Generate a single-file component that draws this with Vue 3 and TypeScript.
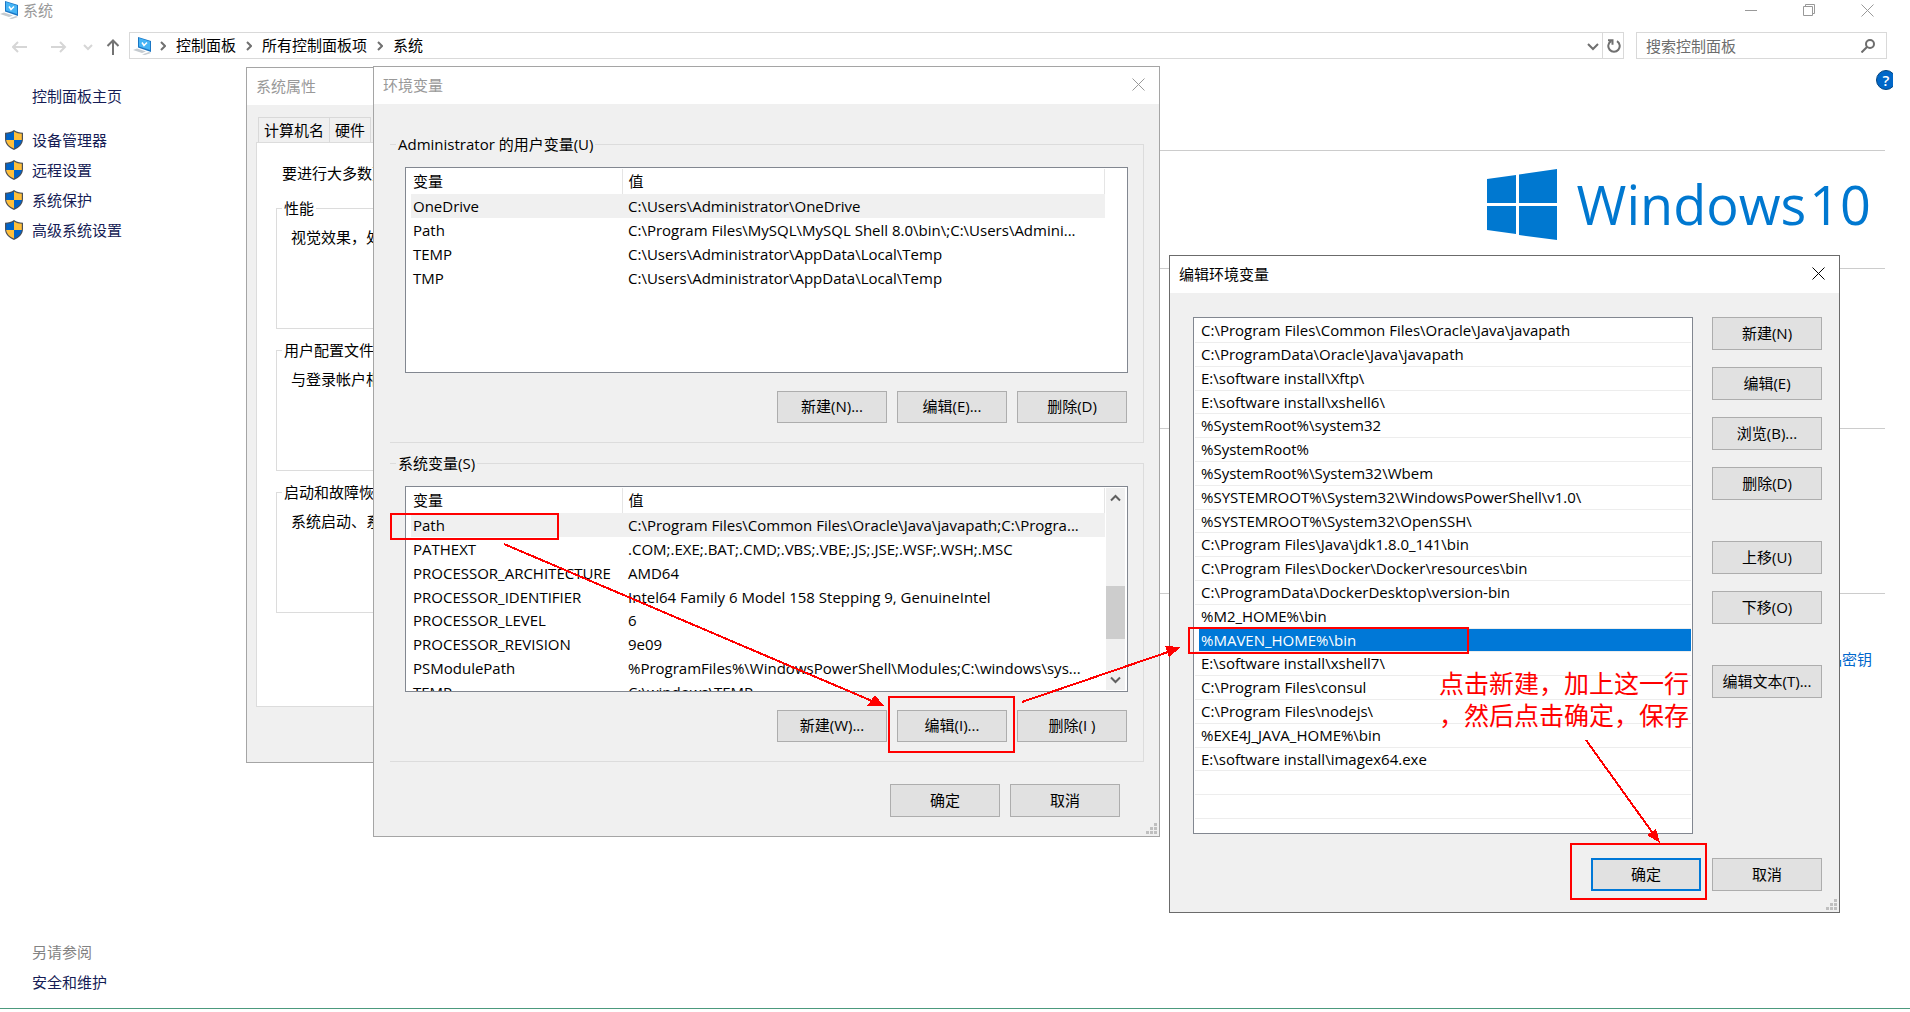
<script setup lang="ts">
interface Variable {
  name: string
  value: string
}

const crumbs: string[] = ['控制面板', '所有控制面板项', '系统']
const tasks: string[] = ['设备管理器', '远程设置', '系统保护', '高级系统设置']

const propertyGroups = [
  { title: '性能', text: '视觉效果，处' },
  { title: '用户配置文件', text: '与登录帐户相' },
  { title: '启动和故障恢', text: '系统启动、系' },
]

const userVariables: Variable[] = [
  { name: 'OneDrive', value: 'C:\\Users\\Administrator\\OneDrive' },
  { name: 'Path', value: 'C:\\Program Files\\MySQL\\MySQL Shell 8.0\\bin\\;C:\\Users\\Admini...' },
  { name: 'TEMP', value: 'C:\\Users\\Administrator\\AppData\\Local\\Temp' },
  { name: 'TMP', value: 'C:\\Users\\Administrator\\AppData\\Local\\Temp' },
]

const systemVariables: Variable[] = [
  { name: 'Path', value: 'C:\\Program Files\\Common Files\\Oracle\\Java\\javapath;C:\\Progra...' },
  { name: 'PATHEXT', value: '.COM;.EXE;.BAT;.CMD;.VBS;.VBE;.JS;.JSE;.WSF;.WSH;.MSC' },
  { name: 'PROCESSOR_ARCHITECTURE', value: 'AMD64' },
  { name: 'PROCESSOR_IDENTIFIER', value: 'Intel64 Family 6 Model 158 Stepping 9, GenuineIntel' },
  { name: 'PROCESSOR_LEVEL', value: '6' },
  { name: 'PROCESSOR_REVISION', value: '9e09' },
  { name: 'PSModulePath', value: '%ProgramFiles%\\WindowsPowerShell\\Modules;C:\\windows\\sys...' },
  { name: 'TEMP', value: 'C:\\windows\\TEMP' },
]

const groups = [
  {
    title: 'Administrator 的用户变量(U)',
    rows: userVariables,
    buttons: ['新建(N)...', '编辑(E)...', '删除(D)'],
    scroll: false,
  },
  {
    title: '系统变量(S)',
    rows: systemVariables,
    buttons: ['新建(W)...', '编辑(I)...', '删除(I )'],
    scroll: true,
  },
]

const paths: string[] = [
  'C:\\Program Files\\Common Files\\Oracle\\Java\\javapath',
  'C:\\ProgramData\\Oracle\\Java\\javapath',
  'E:\\software install\\Xftp\\',
  'E:\\software install\\xshell6\\',
  '%SystemRoot%\\system32',
  '%SystemRoot%',
  '%SystemRoot%\\System32\\Wbem',
  '%SYSTEMROOT%\\System32\\WindowsPowerShell\\v1.0\\',
  '%SYSTEMROOT%\\System32\\OpenSSH\\',
  'C:\\Program Files\\Java\\jdk1.8.0_141\\bin',
  'C:\\Program Files\\Docker\\Docker\\resources\\bin',
  'C:\\ProgramData\\DockerDesktop\\version-bin',
  '%M2_HOME%\\bin',
  '%MAVEN_HOME%\\bin',
  'E:\\software install\\xshell7\\',
  'C:\\Program Files\\consul',
  'C:\\Program Files\\nodejs\\',
  '%EXE4J_JAVA_HOME%\\bin',
  'E:\\software install\\imagex64.exe',
  '',
  '',
]
const selectedPath = '%MAVEN_HOME%\\bin'

const editActions: string[][] = [
  ['新建(N)', '编辑(E)', '浏览(B)...', '删除(D)'],
  ['上移(U)', '下移(O)'],
  ['编辑文本(T)...'],
]
</script>

<template>
  <div class="desktop" lang="zh-CN">
    <header class="titlebar">
      <svg class="pc" viewBox="0 0 19 18" aria-hidden="true">
        <path d="M5 0l13 4v11L5 10.500z" fill="#1b76c4" />
        <path d="M6 1l11 3.500v8.500L6 9.500z" fill="#45b4f5" />
        <path d="M9 5.500l2 3 3-3" fill="none" stroke="#fff" stroke-width="1.500" />
        <path d="M0 13l4-1.500 9 3-4 1.500zM9 17.500l7-2.500 2 1-6 2z" fill="#c5cbd0" />
      </svg>
      <span class="app-name">系统</span>
      <div class="controls">
        <button type="button" aria-label="最小化"><svg viewBox="0 0 13 13"><path d="M0 6.500h12" /></svg></button>
        <button type="button" aria-label="还原"><svg viewBox="0 0 13 13"><path d="M.5 2.500h9v9h-9zM2.500 2V.5h9v9H10" /></svg></button>
        <button type="button" aria-label="关闭"><svg viewBox="0 0 13 13"><path d="M.5.5l12 12M12.500.5l-12 12" /></svg></button>
      </div>
    </header>

    <nav class="navbar">
      <div class="history">
        <button type="button" class="off" aria-label="后退"><svg width="16" height="14" viewBox="0 0 16 14"><path d="M15 7H1M6 2L1 7l5 5" /></svg></button>
        <button type="button" class="off forward" aria-label="前进"><svg width="16" height="14" viewBox="0 0 16 14"><path d="M0 7h14M9 2l5 5-5 5" /></svg></button>
        <button type="button" class="off recent" aria-label="最近"><svg width="10" height="8" viewBox="0 0 10 8"><path d="M1 2l4 4 4-4" /></svg></button>
        <button type="button" aria-label="向上"><svg width="14" height="16" viewBox="0 0 14 16"><path d="M7 16V1.500M1.500 7L7 1.500 12.500 7" /></svg></button>
      </div>
      <div class="address">
        <svg class="pc" viewBox="0 0 19 18" aria-hidden="true">
          <path d="M5 0l13 4v11L5 10.500z" fill="#1b76c4" />
          <path d="M6 1l11 3.500v8.500L6 9.500z" fill="#45b4f5" />
          <path d="M9 5.500l2 3 3-3" fill="none" stroke="#fff" stroke-width="1.500" />
          <path d="M0 13l4-1.500 9 3-4 1.500zM9 17.500l7-2.500 2 1-6 2z" fill="#c5cbd0" />
        </svg>
        <template v-for="crumb in crumbs" :key="crumb">
          <svg class="sep" width="6" height="10" viewBox="0 0 6 10" aria-hidden="true"><path d="M1 1l4 4-4 4" /></svg>
          <a href="#">{{ crumb }}</a>
        </template>
        <button type="button" class="drop" aria-label="历史记录"><svg width="12" height="8" viewBox="0 0 12 8"><path d="M1 1l5 5 5-5" /></svg></button>
        <button type="button" class="refresh" aria-label="刷新"><svg width="14" height="15" viewBox="0 0 14 15"><path d="M10 2.200A5.700 5.700 0 1 1 4 2.200M1 1.200h4.500v4.500" /></svg></button>
      </div>
      <label class="search">
        <input type="text" placeholder="搜索控制面板" aria-label="搜索控制面板" />
        <svg width="14" height="14" viewBox="0 0 14 14" aria-hidden="true"><circle cx="9" cy="5" r="4" /><path d="M6 8l-5.500 5.500" /></svg>
      </label>
    </nav>

    <div class="content">
      <aside class="sidebar">
        <div>
          <a href="#" class="home">控制面板主页</a>
          <a v-for="task in tasks" :key="task" href="#" class="task">
            <svg width="18" height="20" viewBox="0 0 18 20" aria-hidden="true">
              <path d="M9 0c2.500 2 5.500 2.600 9 2.700V9c0 5-3.500 8.500-9 11C3.500 17.500 0 14 0 9V2.700C3.500 2.600 6.500 2 9 0z" fill="#4a4f57" />
              <path d="M9 1.500V10H1.200V3.800C4 3.600 6.500 3.200 9 1.500z" fill="#0063c8" />
              <path d="M9 1.500c2.500 1.700 5 2.100 7.800 2.300V10H9z" fill="#ffbf3a" />
              <path d="M1.200 10H9v8.600c-4.500-2.100-7.500-4.900-7.800-8.600z" fill="#ffbf3a" />
              <path d="M16.800 10H9v8.600c4.500-2.100 7.500-4.900 7.800-8.600z" fill="#0063c8" />
            </svg>
            <span>{{ task }}</span>
          </a>
        </div>
        <div class="see-also">
          <span>另请参阅</span>
          <a href="#">安全和维护</a>
        </div>
      </aside>
      <main class="main">
        <div class="help-row">
          <button type="button" class="help" aria-label="帮助">?</button>
        </div>
        <section class="brand">
          <svg width="70" height="71" viewBox="0 0 70 71" aria-hidden="true">
            <path fill="#0078d0" d="M0 10l29-4v28H0zM32 5.500L70 0v34H32zM0 37h29v28L0 61zM32 37h38v34l-38-5z" />
          </svg>
          <span class="wordmark"><span>Windows</span><span>10</span></span>
        </section>
        <section class="spec"></section>
        <section class="spec"></section>
        <section class="activation"><a href="#">产品密钥</a></section>
      </main>
    </div>

    <section class="dialog properties inactive">
      <header>系统属性</header>
      <div class="tabs">
        <button type="button">计算机名</button>
        <button type="button">硬件</button>
      </div>
      <div class="pane">
        <p>要进行大多数更</p>
        <fieldset v-for="group in propertyGroups" :key="group.title">
          <legend>{{ group.title }}</legend>
          {{ group.text }}
        </fieldset>
      </div>
    </section>

    <section class="dialog variables inactive">
      <header>
        <span>环境变量</span>
        <button type="button" class="close" aria-label="关闭"><svg viewBox="0 0 13 13"><path d="M.5.5l12 12M12.500.5l-12 12" /></svg></button>
      </header>
      <div class="variables-body">
        <fieldset v-for="group in groups" :key="group.title">
          <legend>{{ group.title }}</legend>
          <div class="list">
            <table>
              <thead>
                <tr><th>变量</th><th>值</th></tr>
              </thead>
              <tbody>
                <tr v-for="(row, index) in group.rows" :key="row.name" :class="{ selected: index === 0 }">
                  <td>{{ row.name }}</td>
                  <td>{{ row.value }}</td>
                </tr>
              </tbody>
            </table>
            <div v-if="group.scroll" class="scrollbar">
              <svg width="11" height="8" viewBox="0 0 11 8"><path d="M1 6.500L5.500 2 10 6.500" /></svg>
              <div class="thumb"></div>
              <svg width="11" height="8" viewBox="0 0 11 8"><path d="M1 1.500L5.500 6 10 1.500" /></svg>
            </div>
          </div>
          <div class="actions">
            <button v-for="label in group.buttons" :key="label" type="button" class="btn">{{ label }}</button>
          </div>
        </fieldset>
        <div class="actions confirm">
          <button type="button" class="btn">确定</button>
          <button type="button" class="btn">取消</button>
        </div>
      </div>
      <svg class="grip" width="11" height="11" viewBox="0 0 11 11" aria-hidden="true"><path d="M8 0h3v3H8zM4 4h3v3H4zM8 4h3v3H8zM0 8h3v3H0zM4 8h3v3H4zM8 8h3v3H8z" /></svg>
    </section>

    <section class="dialog editor">
      <header>
        <span>编辑环境变量</span>
        <button type="button" class="close" aria-label="关闭"><svg viewBox="0 0 13 13"><path d="M.5.5l12 12M12.500.5l-12 12" /></svg></button>
      </header>
      <div class="editor-body">
        <div class="columns">
          <ul class="paths">
            <li v-for="(path, index) in paths" :key="index" :class="{ chosen: path === selectedPath }">
              <span>{{ path }}</span>
            </li>
          </ul>
          <div class="side">
            <div v-for="(set, index) in editActions" :key="index" class="set">
              <button v-for="label in set" :key="label" type="button" class="btn">{{ label }}</button>
            </div>
          </div>
        </div>
        <div class="actions">
          <button type="button" class="btn default">确定</button>
          <button type="button" class="btn">取消</button>
        </div>
      </div>
      <svg class="grip" width="11" height="11" viewBox="0 0 11 11" aria-hidden="true"><path d="M8 0h3v3H8zM4 4h3v3H4zM8 4h3v3H8zM0 8h3v3H0zM4 8h3v3H4zM8 8h3v3H8z" /></svg>
    </section>

    <svg class="marks" aria-hidden="true">
      <g fill="none" stroke="#f00" stroke-width="2">
        <rect x="391" y="514" width="167" height="25" />
        <rect x="889" y="697" width="125" height="55" />
        <rect x="1189" y="628" width="279" height="25" />
        <rect x="1571" y="844" width="135" height="55" />
        <path d="M504 544L872 701M1022 702l146-50M1586 740l66 92" />
      </g>
      <path fill="#f00" d="M884 706h-17l8-11zM1181 647l-16-1 4 11zM1660 843l-13-8 9-6z" />
    </svg>
    <p class="note">点击新建，加上这一行<br />，然后点击确定，保存</p>
  </div>
</template>

<style>
body {
  margin: 0;
  background: #fff;
}
</style>

<style scoped>
.desktop,
.desktop * {
  box-sizing: border-box;
}
.desktop {
  position: relative;
  display: flex;
  flex-direction: column;
  min-height: 100vh;
  padding-bottom: 3px;
  overflow: hidden;
  background: #fff;
  color: #000;
  font: 15px/20px "Open Sans", "Noto Sans CJK SC", sans-serif;
}
button,
input {
  font: inherit;
  color: inherit;
}
button {
  padding: 0;
  border: 0;
  background: none;
  white-space: nowrap;
}
a {
  color: #151c55;
  text-decoration: none;
}
svg {
  display: block;
  flex: none;
}
.pc {
  width: 19px;
  height: 18px;
}

.titlebar {
  display: flex;
  align-items: center;
  height: 20px;
  color: #999;
}
.app-name {
  margin-left: 4px;
}
.controls {
  display: flex;
  gap: 45px;
  margin: 0 36px 0 auto;
}
.controls svg,
.close svg {
  width: 13px;
  height: 13px;
  fill: none;
  stroke: currentColor;
}

.navbar {
  display: flex;
  margin-top: 12px;
  padding-right: 23px;
  height: 27px;
}
.history {
  display: flex;
  align-items: center;
  width: 129px;
  padding: 3px 0 0 12px;
  color: #737373;
}
.history svg {
  fill: none;
  stroke: currentColor;
  stroke-width: 2;
}
.history .off {
  margin-right: 23px;
  color: #d6d6d6;
}
.history .forward {
  margin-right: 16px;
}
.history .recent {
  margin-right: 13px;
}
.address {
  display: flex;
  align-items: center;
  flex: 1;
  padding-left: 3px;
  border: 1px solid #d9d9d9;
}
.address a {
  margin-right: 10px;
  padding-bottom: 2px;
  color: #000;
}
.address .sep {
  margin-right: 10px;
  fill: none;
  stroke: #707070;
  stroke-width: 2;
}
.address .pc {
  margin-right: 8px;
}
.drop {
  margin-left: auto;
  padding: 3px 3px 0 0;
}
.drop svg,
.refresh svg {
  fill: none;
  stroke: #707070;
  stroke-width: 2;
}
.refresh {
  align-self: stretch;
  padding: 2px 2px 0 4px;
  border-left: 1px solid #d9d9d9;
}
.search {
  display: flex;
  align-items: center;
  width: 251px;
  margin-left: 12px;
  padding: 0 11px 0 9px;
  border: 1px solid #d9d9d9;
}
.search input {
  flex: 1;
  min-width: 0;
  padding: 0;
  border: 0;
  outline: 0;
  background: none;
}
.search input::placeholder {
  color: #6d6d6d;
  opacity: 1;
}
.search svg {
  fill: none;
  stroke: #6d6d6d;
  stroke-width: 2;
}

.content {
  display: flex;
  flex: 1;
  padding-right: 17px;
  border-bottom: 1px solid #4c9a7d;
}
.sidebar {
  display: flex;
  flex-direction: column;
  justify-content: space-between;
  width: 260px;
  padding: 22px 0 11px;
  line-height: 30px;
}
.home {
  display: block;
  margin: 0 0 14px 32px;
}
.task {
  display: flex;
  align-items: center;
  gap: 9px;
  padding-left: 5px;
}
.see-also {
  display: flex;
  flex-direction: column;
  padding-left: 32px;
  color: #838383;
}
.main {
  flex: 1;
  overflow: hidden;
}
.main section {
  margin-right: 8px;
  border-top: 1px solid #ccc;
}
.help-row {
  display: flex;
  justify-content: flex-end;
  height: 91px;
  padding-top: 11px;
}
.help {
  width: 20px;
  height: 20px;
  margin-right: -3px;
  flex: none;
  border: 1px solid #04457f;
  border-radius: 50%;
  background: #0067c8;
  color: #fff;
  font-weight: 600;
  line-height: 18px;
}
.brand {
  display: flex;
  align-items: flex-start;
  justify-content: flex-end;
  gap: 20px;
  height: 118px;
  padding: 18px 14px 0 0;
}
.wordmark {
  display: flex;
  gap: 3px;
  color: #0078d0;
  font-size: 54px;
  line-height: 70px;
}
.spec {
  height: 160px;
}
.spec + .spec {
  height: 165px;
}
.activation {
  padding: 55px 13px 0 0;
  text-align: right;
}
.activation a {
  color: #0066cc;
}

.dialog {
  position: absolute;
  display: flex;
  flex-direction: column;
  border: 1px solid #6b6b6b;
  background: #f0f0f0;
}
.dialog.inactive {
  border-color: #a5a5a5;
}
.dialog > header {
  display: flex;
  align-items: center;
  justify-content: space-between;
  height: 37px;
  padding: 0 14px 2px 9px;
  background: #fff;
}
.dialog.inactive > header {
  color: #999;
}
.grip {
  position: absolute;
  right: 2px;
  bottom: 2px;
  fill: #bfbfbf;
}
fieldset {
  min-width: 0;
  margin: 0;
  border: 1px solid #dcdcdc;
}
legend {
  padding: 0 2px;
}

.properties {
  left: 246px;
  top: 67px;
  width: 140px;
  height: 696px;
  overflow: hidden;
  white-space: nowrap;
}
.tabs {
  display: flex;
  padding: 12px 0 0 11px;
}
.tabs button {
  height: 25px;
  padding: 0 5px;
  border: 1px solid #d9d9d9;
  border-bottom: 0;
}
.tabs button + button {
  border-left: 0;
}
.pane {
  height: 565px;
  margin-left: 9px;
  padding: 20px 0 0 19px;
  border: 1px solid #dcdcdc;
  background: #fff;
}
.pane p {
  margin: 0 0 15px 6px;
}
.pane fieldset {
  height: 131px;
  margin-bottom: 11px;
  padding: 9px 0 0 14px;
}
.pane legend {
  margin-left: -9px;
}

.variables {
  left: 373px;
  top: 66px;
  width: 787px;
}
.variables-body {
  padding: 30px 15px 19px 16px;
}
.variables-body fieldset {
  padding: 13px 15px 19px 15px;
  border-left: 0;
}
.variables-body fieldset + fieldset {
  margin-top: 10px;
}
.variables-body legend {
  margin-left: -9px;
}
.list {
  display: flex;
  justify-content: space-between;
  height: 206px;
  padding: 1px 2px 1px 5px;
  overflow: hidden;
  border: 1px solid #828790;
  background: #fff;
}
table {
  width: 694px;
  height: 0;
  table-layout: fixed;
  border-collapse: collapse;
  white-space: nowrap;
}
tr {
  height: 24px;
}
tbody tr:nth-child(5n + 4) {
  height: 23px;
}
th,
td {
  padding: 0 0 0 6px;
  text-align: left;
  font-weight: normal;
}
th {
  height: 25px;
  padding-bottom: 2px;
  border-right: 1px solid #e5e5e5;
}
th:first-child,
td:first-child {
  width: 211px;
  padding-left: 2px;
}
.selected {
  background: #f0f0f0;
}
.scrollbar {
  display: flex;
  flex-direction: column;
  align-items: center;
  justify-content: space-between;
  width: 19px;
  padding: 6px 0;
  background: #f0f0f0;
}
.scrollbar svg {
  fill: none;
  stroke: #606060;
  stroke-width: 2;
}
.thumb {
  width: 19px;
  height: 53px;
  margin-top: 46px;
  background: #cdcdcd;
}
.actions {
  display: flex;
  justify-content: flex-end;
  gap: 10px;
  margin-top: 18px;
}
.btn {
  width: 110px;
  height: 33px;
  padding-bottom: 2px;
  border: 1px solid #adadad;
  background: #e1e1e1;
}
.btn.default {
  border: 2px solid #0078d7;
}
fieldset .actions {
  padding-right: 1px;
}
fieldset .btn {
  height: 32px;
}
.confirm {
  margin-top: 22px;
  padding-right: 24px;
}

.editor {
  left: 1169px;
  top: 255px;
  width: 671px;
}
.editor-body {
  padding: 24px 17px 21px 23px;
}
.columns {
  display: flex;
  justify-content: space-between;
}
.paths {
  width: 500px;
  height: 517px;
  margin: 0;
  padding: 1px;
  overflow: hidden;
  border: 1px solid #828790;
  background: #fff;
  list-style: none;
}
.paths li {
  height: 24px;
  padding-left: 4px;
  border-bottom: 1px solid #ededed;
  white-space: nowrap;
}
.paths li:nth-child(5n + 4) {
  height: 23px;
}
.paths span {
  display: block;
  height: 100%;
  padding-left: 2px;
  line-height: 23px;
}
.paths .chosen span {
  background: #0078d7;
  color: #fff;
}
.side,
.set {
  display: flex;
  flex-direction: column;
}
.side {
  gap: 41px;
}
.set {
  gap: 17px;
}
.editor .actions {
  gap: 11px;
  margin-top: 24px;
}

.marks {
  position: absolute;
  inset: 0;
  width: 100%;
  height: 100%;
  pointer-events: none;
  shape-rendering: crispEdges;
}
.note {
  position: absolute;
  left: 1439px;
  top: 667px;
  margin: 0;
  color: #f00;
  font-size: 25px;
  line-height: 32px;
  white-space: nowrap;
}
</style>
